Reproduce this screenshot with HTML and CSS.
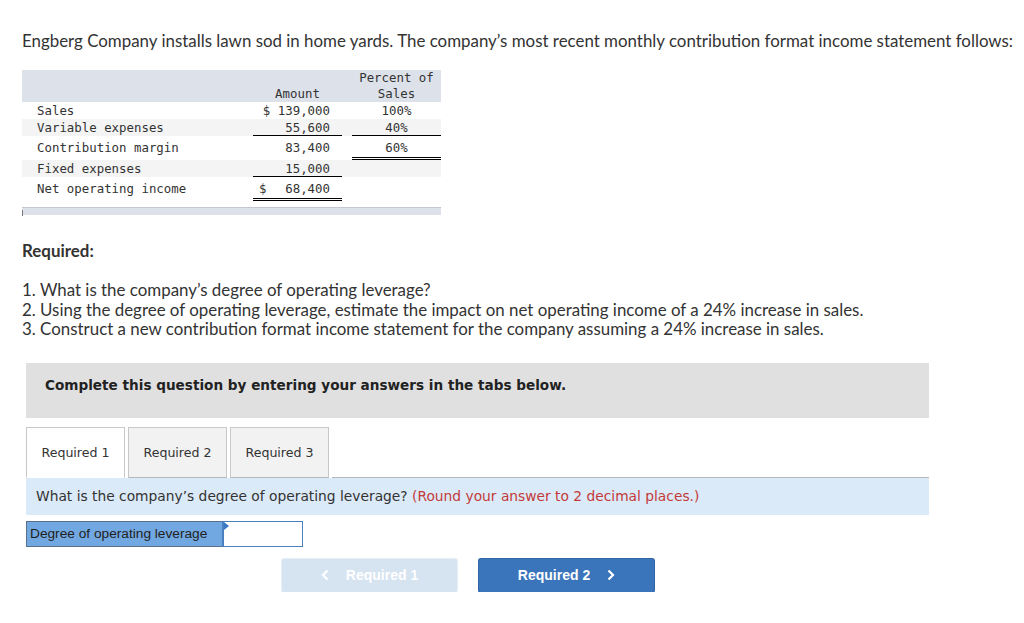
FILE: index.html
```html
<!DOCTYPE html>
<html lang="en">
<head>
<meta charset="utf-8">
<title>Engberg Company</title>
<link rel="stylesheet" href="styles.css">
</head>
<body>
<main class="page">
  <p class="intro">Engberg Company installs lawn sod in home yards. The company’s most recent monthly contribution format income statement follows:</p>

  <table class="stmt">
    <colgroup>
      <col class="c-label"><col class="c-amt"><col class="c-gap"><col class="c-pct">
    </colgroup>
    <thead>
      <tr class="head">
        <th></th>
        <th class="amt-h">Amount</th>
        <th></th>
        <th class="pct-h">Percent of<br>Sales</th>
      </tr>
    </thead>
    <tbody>
      <tr class="r-sales">
        <td class="lbl">Sales</td>
        <td class="amt">$ 139,000</td>
        <td></td>
        <td class="pct">100%</td>
      </tr>
      <tr class="r-var shade">
        <td class="lbl">Variable expenses</td>
        <td class="amt ul">55,600</td>
        <td></td>
        <td class="pct ul">40%</td>
      </tr>
      <tr class="r-cm">
        <td class="lbl">Contribution margin</td>
        <td class="amt">83,400</td>
        <td></td>
        <td class="pct dbl">60%</td>
      </tr>
      <tr class="r-fix shade">
        <td class="lbl">Fixed expenses</td>
        <td class="amt ul">15,000</td>
        <td></td>
        <td class="pct"></td>
      </tr>
      <tr class="r-net">
        <td class="lbl">Net operating income</td>
        <td class="amt dbl"><span class="split"><span>$</span><span>68,400</span></span></td>
        <td></td>
        <td class="pct"></td>
      </tr>
    </tbody>
  </table>
  <div class="stmt-foot"></div>

  <h3 class="req-title">Required:</h3>
  <div class="req-list">
    <p>1. What is the company’s degree of operating leverage?</p>
    <p>2. Using the degree of operating leverage, estimate the impact on net operating income of a 24% increase in sales.</p>
    <p>3. Construct a new contribution format income statement for the company assuming a 24% increase in sales.</p>
  </div>

  <div class="instr">Complete this question by entering your answers in the tabs below.</div>

  <div class="tabs">
    <div class="tab active">Required 1</div>
    <div class="tab">Required 2</div>
    <div class="tab">Required 3</div>
    <div class="tab-rest"></div>
  </div>
  <div class="panel">
    <p>What is the company’s degree of operating leverage? <span class="hint">(Round your answer to 2 decimal places.)</span></p>
  </div>

  <div class="answer-row">
    <div class="ans-label">Degree of operating leverage</div>
    <div class="ans-input"></div>
  </div>

  <div class="nav">
    <button class="btn prev" type="button"><svg class="chev" width="8" height="12" viewBox="0 0 8 12"><polyline points="6.5,1.5 2,6 6.5,10.5" fill="none" stroke="#fff" stroke-width="2.2"/></svg>Required 1</button>
    <button class="btn next" type="button">Required 2<svg class="chev" width="8" height="12" viewBox="0 0 8 12"><polyline points="1.5,1.5 6,6 1.5,10.5" fill="none" stroke="#fff" stroke-width="2.2"/></svg></button>
  </div>
</main>
</body>
</html>
```
FILE: styles.css
```css
* { box-sizing: border-box; }
html, body { margin: 0; padding: 0; background: #fff; }
body {
  font-family: "Lato", "Liberation Sans", sans-serif;
  color: #333;
}
.page { padding: 0 0 0 22px; width: 1024px; }

.intro {
  margin: 0;
  padding-top: 31px;
  font-size: 16.9px;
  line-height: 20px;
  color: #333;
  white-space: nowrap;
}

/* statement table */
.stmt {
  margin-top: 19px;
  border-collapse: separate;
  border-spacing: 0;
  width: 419px;
  table-layout: fixed;
  font-family: "DejaVu Sans Mono", "Liberation Mono", monospace;
  font-size: 12.4px;
  color: #333;
}
.c-label { width: 231px; }
.c-amt { width: 89px; }
.c-gap { width: 10px; }
.c-pct { width: 89px; }
.stmt th, .stmt td { padding: 0; font-weight: normal; white-space: nowrap; }
.stmt .head th {
  background: #dde1ea;
  height: 32px;
  line-height: 16px;
  vertical-align: bottom;
}
.amt-h { text-align: center; }
.pct-h { text-align: center; }
.stmt td { vertical-align: middle; line-height: 16px; }
.r-sales td { height: 17px; }
.r-var td { height: 17px; }
.r-cm td { height: 24px; }
.r-fix td { height: 17px; }
.r-net td { height: 24px; }
.shade td { background: #f4f4f4; }
.lbl { padding-left: 15px !important; }
.amt { text-align: right; padding-right: 12px !important; }
.pct { text-align: center; }
.ul { box-shadow: inset 0 -1px 0 #000; }
.dbl { box-shadow: inset 0 -1px 0 #000, inset 0 -2px 0 #fff, inset 0 -3px 0 #000; }
.r-net .amt { padding-left: 6px; }
.split { display: flex; justify-content: space-between; }

.stmt-foot {
  margin-top: 6px;
  width: 419px;
  height: 8px;
  background: #dde1ea;
  border-top: 1px solid #c4c8d0;
  position: relative;
}
.stmt-foot::before {
  content: "";
  position: absolute;
  left: 0; top: 2px;
  width: 1px; height: 6px;
  background: #777;
}

.req-title {
  margin: 26px 0 0;
  font-size: 16.9px;
  line-height: 20px;
  font-weight: 700;
  color: #333;
}
.req-list { margin-top: 19px; }
.req-list p {
  margin: 0;
  font-size: 16.9px;
  line-height: 19.5px;
  color: #333;
}

.instr {
  margin: 24px 0 0 4px;
  width: 903px;
  height: 55px;
  background: #e0e0e0;
  padding: 14px 0 0 19px;
  line-height: 16px;
  font-family: "DejaVu Sans", Verdana, sans-serif;
  font-weight: 700;
  font-size: 13.6px;
  color: #222;
}

.tabs {
  margin: 9px 0 0 4px;
  width: 903px;
  display: flex;
  height: 51px;
}
.tab {
  width: 99px;
  height: 51px;
  margin-right: 3px;
  border: 1px solid #c8c8c8;
  border-bottom: 1px solid #b8b8b8;
  background: #f2f2f2;
  display: flex;
  align-items: center;
  justify-content: center;
  font-family: "DejaVu Sans", Verdana, sans-serif;
  font-size: 12.6px;
  color: #333;
}
.tab.active { background: #fff; border-bottom-color: #fff; }
.tab-rest { flex: 1; border-bottom: 1px solid #b8b8b8; }

.panel {
  margin-left: 4px;
  width: 903px;
  height: 37px;
  background: #dbeaf8;
  padding-left: 10px;
  display: flex;
  align-items: center;
}
.panel p {
  margin: 0;
  font-family: "DejaVu Sans", Verdana, sans-serif;
  font-size: 13.8px;
  color: #333;
}
.hint { color: #c33a3a; }

.answer-row {
  margin: 6px 0 0 4px;
  display: flex;
  height: 26px;
}
.ans-label {
  width: 196px;
  background: #72a8e1;
  border: 1px solid #5a6f8a;
  border-right: none;
  font-family: "Liberation Sans", Arial, sans-serif;
  font-size: 13.7px;
  color: #222;
  padding-left: 3px;
  display: flex;
  align-items: center;
}
.ans-input {
  width: 81px;
  border: 1px solid #4a7fc0;
  border-left: 2px solid #4a7fc0;
  background: #fff;
  position: relative;
}
.ans-input::before {
  content: "";
  position: absolute;
  left: 0; top: 0;
  border-top: 4px solid transparent;
  border-bottom: 4px solid transparent;
  border-left: 5px solid #3a78c4;
}

.nav {
  margin: 12px 0 0 260px;
  display: flex;
  gap: 22px;
}
.btn {
  width: 175px;
  height: 33px;
  border: none;
  border-radius: 2px;
  font-family: "Liberation Sans", Arial, sans-serif;
  font-weight: 700;
  font-size: 14px;
  color: #fff;
  display: flex;
  align-items: center;
  justify-content: center;
  padding: 0;
}
.prev { background: #d6e3f1; box-shadow: 0 0 0 1px #e6eef8; }
.next { background: #3a75bb; box-shadow: 0 0 0 1px #2f64a6; }
.prev .chev { margin-right: 17px; }
.next .chev { margin-left: 17px; }
.chev { display: block; }
```
